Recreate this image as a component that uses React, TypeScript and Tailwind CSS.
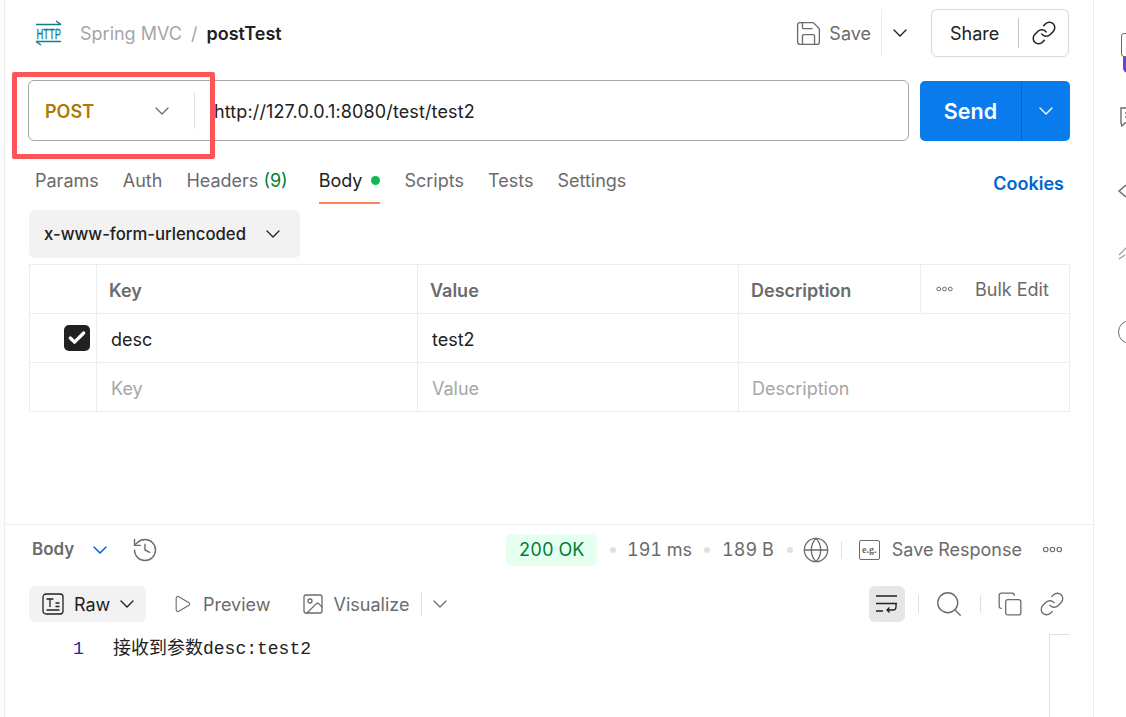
import { ChevronDown, Check, Copy, Globe, History, Image, Link, Play, Save, Search } from "lucide-react";

const Dots = ({ big }: { big?: boolean }) => (
  <svg width={big ? 21 : 17} height={big ? 7 : 6} viewBox="0 0 17 6" fill="none" stroke="#6b6b6b" strokeWidth="1">
    <circle cx="2.7" cy="3" r="1.9" />
    <circle cx="8.5" cy="3" r="1.9" />
    <circle cx="14.3" cy="3" r="1.9" />
  </svg>
);

const HttpIcon = () => (
  <svg width="26" height="26" viewBox="0 0 26 26" fill="none" stroke="#107c8c" strokeWidth="1.5" overflow="visible">
    <path d="M0 4.5h25M20 1l5 3.5" />
    <path d="M0 21.5h25M0 21.5l5 3.5" />
    <text x="0.5" y="19" fontSize="15" fontFamily="Liberation Sans, sans-serif" fill="#107c8c" stroke="#107c8c" strokeWidth="0.3" textLength="24.5" lengthAdjust="spacingAndGlyphs">
      HTTP
    </text>
  </svg>
);

const RawIcon = () => (
  <svg width="22" height="22" viewBox="0 0 22 22" fill="none" stroke="#212121" strokeWidth="1.3">
    <rect x="1" y="1" width="20" height="20" rx="3" />
    <path d="M4.5 6h7M8 6v8M4.5 17h13M13.5 10h4M13.5 13.5h4" />
  </svg>
);

const WrapIcon = () => (
  <svg width="22" height="20" viewBox="0 0 22 20" fill="none" stroke="#212121" strokeWidth="1.3">
    <path d="M0 2h21M0 9.5h21M0 17h7" />
    <path d="M20 9.5v3.5a3 3 0 0 1-3 3h-6M13.5 13.5L11 16l2.5 2.5" />
  </svg>
);

const EgIcon = () => (
  <span className="flex h-[20px] w-[21px] items-center justify-center rounded-[2px] border border-[#6b6b6b] font-['Liberation_Serif',serif] text-[10px] font-bold text-[#6b6b6b]">
    e.g.
  </span>
);

const Tab = ({ label }: { label: string }) => <div className="pt-[6px] text-[#6b6b6b]">{label}</div>;

const Sep = () => <div className="h-[6px] w-[6px] rounded-full bg-[#e0e0e0]" />;

const Cell = ({ className, children }: { className: string; children?: React.ReactNode }) => (
  <div className={"flex items-center border-r border-[#ededed] " + className}>{children}</div>
);

const App = () => {
  return (
    <div className="relative flex h-[717px] w-[1126px] overflow-hidden bg-white font-['Inter',sans-serif] text-[18px]">
      {/* red highlight drawn over the method picker */}
      <div className="absolute left-[12px] top-[72px] h-[87px] w-[203px] rounded-[2px] border-[5px] border-[#fd5457]" />

      <div className="w-[5px] shrink-0 border-r border-[#ededed] bg-[#fcfcfc]" />

      <div className="flex w-[1088px] shrink-0 flex-col">
        <div className="flex-1 pl-[24px] pr-[23px]">
          {/* title row */}
          <div className="flex h-[80px] items-start justify-between">
            <div className="flex h-[66px] items-center pl-[7px]">
              <HttpIcon />
              <span className="ml-[18px] text-[#a6a6a6]">Spring MVC</span>
              <span className="ml-[9px] text-[#a6a6a6]">/</span>
              <span className="ml-[9px] font-semibold text-[#212121]">postTest</span>
            </div>
            <div className="flex items-center pr-[1px] pt-[9px]">
              <Save size={29} strokeWidth={1.1} className="text-[#6b6b6b]" />
              <span className="ml-[6px] text-[#6b6b6b]">Save</span>
              <div className="ml-[10px] h-[48px] border-l border-[#ededed]" />
              <ChevronDown size={24} strokeWidth={1.4} className="ml-[6px] text-[#212121]" />
              <div className="ml-[19px] flex h-[48px] w-[138px] items-center rounded-[6px] border border-[#d9d9d9]">
                <span className="ml-[18px] text-[#212121]">Share</span>
                <div className="ml-[19px] h-[30px] border-l border-[#c4c4c4]" />
                <Link size={26} strokeWidth={1.4} className="ml-[12px] text-[#212121]" />
              </div>
            </div>
          </div>

          {/* url bar */}
          <div className="flex h-[61px] gap-[11px]">
            <div className="-ml-[1px] flex h-[61px] flex-1 items-center rounded-[6px] border border-[#a6a6a6]">
              <span className="ml-[16px] w-[105px] pt-[2px] font-semibold text-[#ad7a03]">POST</span>
              <ChevronDown size={24} strokeWidth={1.3} className="text-[#6b6b6b]" />
              <div className="ml-[20px] h-[36px] border-l border-[#e0e0e0]" />
              <span className="ml-[19px] pt-[2px] tracking-[0.12px] text-[#212121]">http://127.0.0.1:8080/test/test2</span>
            </div>
            <div className="mt-[1px] flex h-[60px] w-[150px] rounded-[5px] bg-[#097bed] text-white">
              <div className="flex w-[101px] items-center justify-center text-[21.5px] font-semibold">Send</div>
              <div className="flex flex-1 items-center justify-center border-l border-[#0265d2]">
                <ChevronDown size={24} strokeWidth={1.4} />
              </div>
            </div>
          </div>

          {/* request tabs */}
          <div className="mt-[20px] flex h-[43px] justify-between">
            <div className="flex gap-[24px] pl-[6px]">
              <Tab label="Params" />
              <Tab label="Auth" />
              <div className="pt-[6px] text-[#6b6b6b]">
                Headers <span className="text-[#007f31]">(9)</span>
              </div>
              <div className="ml-[7px] flex h-[43px] items-start gap-[9px] border-b-2 border-b-[#f8855c] pt-[6px] text-[#212121]">
                Body
                <span className="mt-[9px] h-[9px] w-[9px] rounded-full bg-[#0cbb52]" />
              </div>
              <Tab label="Scripts" />
              <Tab label="Tests" />
              <Tab label="Settings" />
            </div>
            <div className="pr-[6px] pt-[9px] font-semibold text-[#0265d2]">Cookies</div>
          </div>

          {/* body type picker */}
          <div className="mt-[6px] flex h-[48px] w-[271px] items-center rounded-[6px] bg-[#f2f2f2] pl-[15px] font-medium text-[#212121]">
            <span className="pt-[1px] text-[16.7px]">x-www-form-urlencoded</span>
            <ChevronDown size={24} strokeWidth={1.3} className="ml-[15px]" />
          </div>

          {/* params table */}
          <div className="mt-[6px] w-[1041px] border-l border-t border-[#ededed] text-[#212121]">
            <div className="flex h-[49px] border-b border-[#ededed] font-semibold text-[#6b6b6b]">
              <Cell className="w-[67px]" />
              <Cell className="w-[321px] pl-[12px] pt-[2px]">Key</Cell>
              <Cell className="w-[321px] pl-[12px] pt-[2px]">Value</Cell>
              <Cell className="w-[182px] pl-[12px] pt-[2px]">Description</Cell>
              <Cell className="w-[149px] pl-[15px] font-normal">
                <Dots />
                <span className="ml-[22px]">Bulk Edit</span>
              </Cell>
            </div>
            <div className="flex h-[49px] border-b border-[#ededed]">
              <Cell className="w-[67px] justify-end pr-[6px]">
                <span className="flex h-[26px] w-[26px] items-center justify-center rounded-[5px] bg-[#212121]">
                  <Check size={20} strokeWidth={4} className="text-white" />
                </span>
              </Cell>
              <Cell className="w-[321px] pl-[14px] pt-[2px]">desc</Cell>
              <Cell className="w-[321px] pl-[14px] pt-[2px]">test2</Cell>
              <Cell className="w-[331px]" />
            </div>
            <div className="flex h-[49px] border-b border-[#ededed] text-[#a6a6a6]">
              <Cell className="w-[67px]" />
              <Cell className="w-[321px] pl-[14px] pt-[2px]">Key</Cell>
              <Cell className="w-[321px] pl-[14px] pt-[2px]">Value</Cell>
              <Cell className="w-[331px] pl-[13px] pt-[2px]">Description</Cell>
            </div>
          </div>
        </div>

        {/* response pane */}
        <div className="h-[193px] border-t border-[#ededed] pl-[24px] pr-[23px]">
          <div className="flex h-[49px] items-center justify-between">
            <div className="flex items-center pl-[3px] text-[17px] font-semibold text-[#6b6b6b]">
              Body
              <ChevronDown size={24} strokeWidth={1.5} className="ml-[14px] text-[#0265d2]" />
              <History size={28} strokeWidth={1.2} className="ml-[19px]" />
            </div>
            <div className="flex items-center tabular-nums text-[#6b6b6b]">
              <span className="flex h-[32px] w-[91px] items-center justify-center rounded-[6px] bg-[#e5fff1] text-[#007f31]">200 OK</span>
              <span className="ml-[13px]"><Sep /></span>
              <span className="ml-[11px]">191 ms</span>
              <span className="ml-[12px]"><Sep /></span>
              <span className="ml-[12px]">189 B</span>
              <span className="ml-[13px]"><Sep /></span>
              <Globe size={28} strokeWidth={1.1} className="ml-[9px]" />
              <div className="ml-[11px] h-[18px] border-l border-[#e0e0e0]" />
              <span className="ml-[17px]"><EgIcon /></span>
              <span className="ml-[12px]">Save Response</span>
              <span className="ml-[20px] mr-[7px]"><Dots big /></span>
            </div>
          </div>

          <div className="mt-[12px] flex h-[36px] items-center justify-between">
            <div className="flex items-center text-[#6b6b6b]">
              <div className="flex h-[36px] w-[117px] items-center rounded-[6px] bg-[#f2f2f2] pl-[13px] text-[#212121]">
                <RawIcon />
                <span className="ml-[10px]">Raw</span>
                <ChevronDown size={24} strokeWidth={1.4} className="ml-[5px]" />
              </div>
              <Play size={20} strokeWidth={1.3} className="ml-[26px]" />
              <span className="ml-[11px]">Preview</span>
              <Image size={24} strokeWidth={1.3} className="ml-[30px]" />
              <span className="ml-[9px]">Visualize</span>
              <div className="ml-[12px] h-[24px] border-l border-[#e0e0e0]" />
              <ChevronDown size={24} strokeWidth={1.3} className="ml-[6px]" />
            </div>
            <div className="flex items-center text-[#6b6b6b]">
              <span className="flex h-[36px] w-[36px] items-center justify-center rounded-[6px] bg-[#e6e6e6]">
                <WrapIcon />
              </span>
              <div className="ml-[13px] h-[18px] border-l border-[#e0e0e0]" />
              <Search size={30} strokeWidth={1.1} className="ml-[15px]" />
              <div className="ml-[16px] h-[18px] border-l border-[#e0e0e0]" />
              <Copy size={26} strokeWidth={1.2} className="ml-[16px]" />
              <Link size={26} strokeWidth={1.2} className="ml-[16px] mr-[5px]" />
            </div>
          </div>

          <div className="mt-[12px] flex h-[83px] justify-between">
            <div className="mt-[1px] flex h-[28px] items-center font-['Liberation_Mono','Noto_Sans_CJK_SC',monospace] text-[18px] text-[#212121]">
              <span className="ml-[44px] w-[40px] text-[#0c2f9c]">1</span>
              接收到参数desc:test2
            </div>
            <div className="w-[21px] border-l border-t border-[#e0e0e0]" />
          </div>
        </div>
      </div>

      {/* sidebar rail, mostly cut off by the window edge */}
      <div className="flex-1 overflow-hidden border-l border-[#ededed] pl-[27px] text-[#6b6b6b]">
        <div className="relative mt-[33px] h-[24px] w-[24px] rounded-[3px] border-[1.5px] border-[#6b6b6b]">
          <div className="absolute left-[1px] top-[23px] h-[16px] w-[10px] rounded-b-full bg-[#6d3ee0]" />
        </div>
        <svg className="-ml-[1px] mt-[50px]" width="20" height="20" viewBox="0 0 20 20" fill="none" stroke="#6b6b6b" strokeWidth="1.4">
          <path d="M1 1h18v15H5l-3 3-1-3zM5 6h2M5 10h2" />
        </svg>
        <svg className="-ml-[5px] mt-[56px]" width="12" height="16" viewBox="0 0 12 16" fill="none" stroke="#6b6b6b" strokeWidth="1.4">
          <path d="M10 2L3 8l7 6" />
        </svg>
        <svg className="-ml-[4px] mt-[48px]" width="12" height="14" viewBox="0 0 12 14" fill="none" stroke="#9a9a9a" strokeWidth="1.2">
          <path d="M9 1L2 8M2 12l6-4" />
        </svg>
        <div className="-ml-[3px] mt-[59px] h-[24px] w-[24px] rounded-full border-[1.5px] border-[#6b6b6b]" />
      </div>
    </div>
  );
};

export default App;
